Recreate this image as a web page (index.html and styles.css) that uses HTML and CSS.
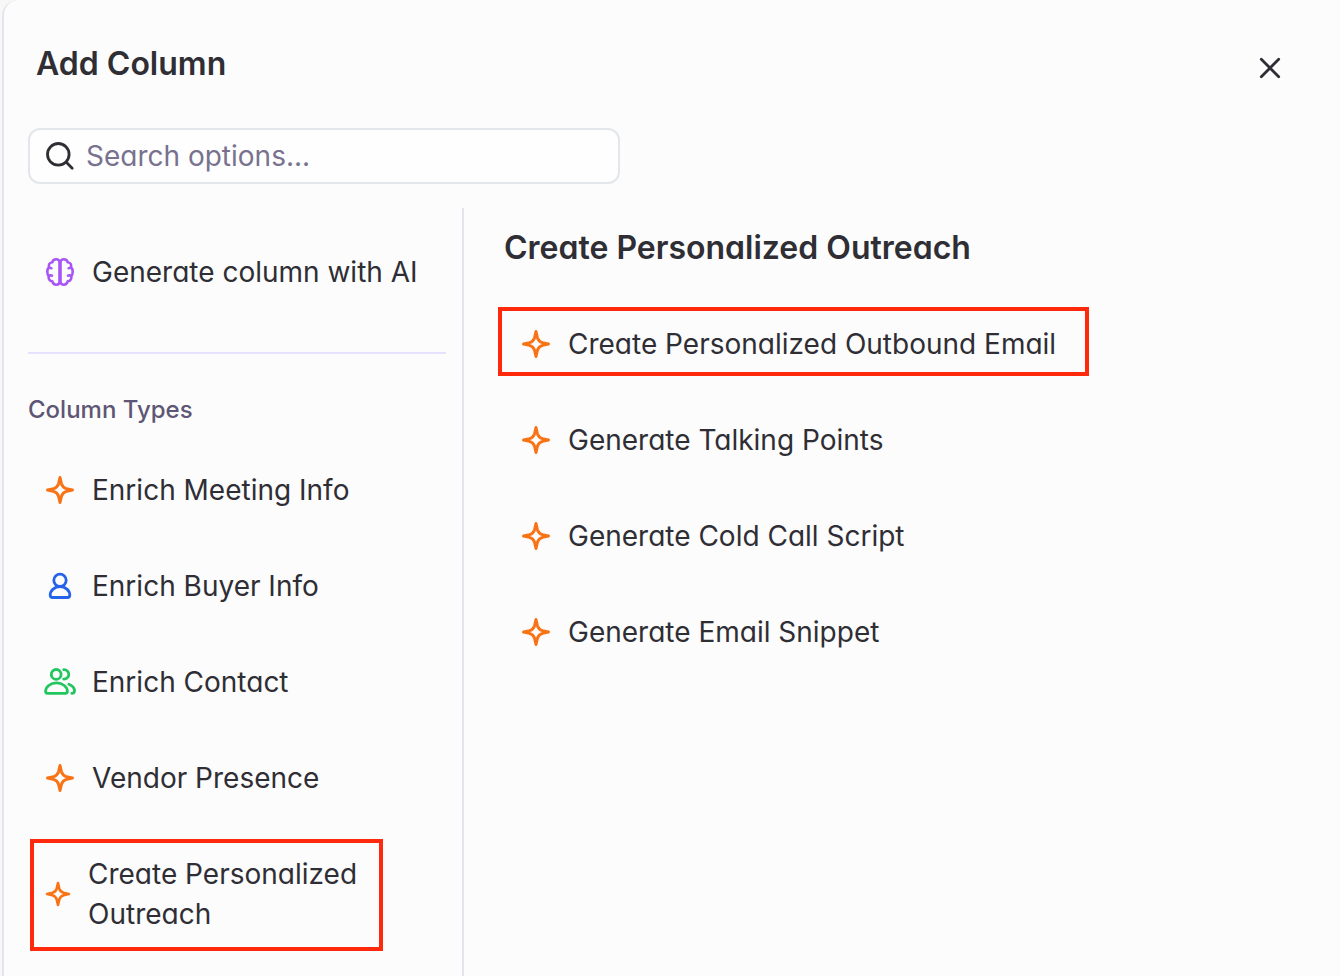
FILE: index.html
```html
<!DOCTYPE html>
<html lang="en">
<head>
<meta charset="utf-8">
<meta name="viewport" content="width=device-width, initial-scale=1">
<title>Add Column</title>
<link rel="stylesheet" href="styles.css">
</head>
<body>
<svg class="sprite" aria-hidden="true">
  <symbol id="spark" viewBox="0 0 32 32"><path d="M16 3.5L17.4 9.6Q18.5 13.5 22.4 14.6L28.5 16L22.4 17.4Q18.5 18.5 17.4 22.4L16 28.5L14.6 22.4Q13.5 18.5 9.6 17.4L3.5 16L9.6 14.6Q13.5 13.5 14.6 9.6Z"/></symbol>
  <symbol id="user" viewBox="0 0 32 32"><circle cx="16" cy="10.3" r="6.2"/><path d="M16 16.5C10.7 16.5 6.2 20.7 6.2 25C6.2 26.7 7.1 27.5 8.6 27.5H23.4C24.9 27.5 25.8 26.7 25.8 25C25.8 20.7 21.3 16.5 16 16.5Z"/></symbol>
  <symbol id="users" viewBox="0 0 32 32"><circle cx="12.2" cy="8.4" r="4.9"/><path d="M12.5 16.8C6.3 16.8 1.6 21.3 1.6 25.2C1.6 26.6 2.5 27.3 3.8 27.3H21.2C22.5 27.3 23.4 26.6 23.4 25.2C23.4 21.3 18.7 16.8 12.5 16.8Z"/><path d="M19.7 3.7C22.6 3.5 24.8 5.6 24.8 8.4C24.8 11.2 22.6 13.2 19.7 13.1"/><path d="M24.8 18.2C28.2 19.5 30.5 22.2 30.5 25C30.5 26.5 29.6 27.3 27.8 27.3"/></symbol>
  <symbol id="brain" viewBox="0 0 32 32"><path d="M15.5 6.2C15.5 4.3 14 3.3 12.2 3.3C10.2 3.3 8.7 4.5 8.4 6.2C5.6 6.4 4.2 8.8 5 11.2C3.8 12.3 3.3 13.8 3.3 15.7C3.3 17.6 3.8 19 4.8 20C4 22.6 5.6 25.2 8.3 25.4C8.9 27.5 10.3 28.7 12.2 28.7C14 28.7 15.5 27.6 15.5 25.7Z"/><path d="M5 11.2Q5.6 12.2 7.4 12.3M4.8 20Q6.4 18.9 8 19.7"/><path d="M16.5 6.2C16.5 4.3 18 3.3 19.8 3.3C21.8 3.3 23.3 4.5 23.6 6.2C26.4 6.4 27.8 8.8 27 11.2C28.2 12.3 28.7 13.8 28.7 15.7C28.7 17.6 28.2 19 27.2 20C28 22.6 26.4 25.2 23.7 25.4C23.1 27.5 21.7 28.7 19.8 28.7C18 28.7 16.5 27.6 16.5 25.7Z"/><path d="M27 11.2Q26.4 12.2 24.6 12.3M27.2 20Q25.6 18.9 24 19.7"/></symbol>
</svg>
<main class="panel">
  <header class="header">
    <h1 class="title">Add Column</h1>
    <button class="close" type="button" aria-label="Close"><svg class="icon" viewBox="0 0 32 32"><path d="M7.3 7.3L24.7 24.7M24.7 7.3L7.3 24.7"/></svg></button>
  </header>
  <label class="search">
    <svg class="icon" viewBox="0 0 32 32"><circle cx="14.3" cy="14.3" r="10.8"/><path d="M22.3 22.3L28.2 28.2"/></svg>
    <input class="search-input" type="text" placeholder="Search options..." aria-label="Search options">
  </label>
  <div class="columns">
    <nav class="sidebar">
      <button class="item" type="button"><svg class="icon purple"><use href="#brain"/></svg><span>Generate column with AI</span></button>
      <hr class="divider">
      <h2 class="group">Column Types</h2>
      <div class="list">
        <button class="item" type="button"><svg class="icon orange"><use href="#spark"/></svg><span>Enrich Meeting Info</span></button>
        <button class="item" type="button"><svg class="icon blue"><use href="#user"/></svg><span>Enrich Buyer Info</span></button>
        <button class="item" type="button"><svg class="icon green"><use href="#users"/></svg><span>Enrich Contact</span></button>
        <button class="item" type="button"><svg class="icon orange"><use href="#spark"/></svg><span>Vendor Presence</span></button>
        <button class="item marked marked-side" type="button"><svg class="icon small orange"><use href="#spark"/></svg><span>Create Personalized<br>Outreach</span></button>
      </div>
    </nav>
    <section class="content">
      <h2 class="title">Create Personalized Outreach</h2>
      <div class="list">
        <button class="item marked marked-main" type="button"><svg class="icon orange"><use href="#spark"/></svg><span>Create Personalized Outbound Email</span></button>
        <button class="item" type="button"><svg class="icon orange"><use href="#spark"/></svg><span>Generate Talking Points</span></button>
        <button class="item" type="button"><svg class="icon orange"><use href="#spark"/></svg><span>Generate Cold Call Script</span></button>
        <button class="item" type="button"><svg class="icon orange"><use href="#spark"/></svg><span>Generate Email Snippet</span></button>
      </div>
    </section>
  </div>
</main>
</body>
</html>
```
FILE: styles.css
```css
* { box-sizing: border-box; }
body {
  margin: 0;
  padding-left: 2px;
  background: #f7f7f8;
  color: #2f2e35;
  font-family: Inter, "Liberation Sans", sans-serif;
  font-size: 28px;
  line-height: 40px;
  font-optical-sizing: none;
  font-feature-settings: "cv11";
}
h1, h2 { margin: 0; }
button, input { font: inherit; color: inherit; font-optical-sizing: none; }
button {
  border: 0;
  background: none;
  text-align: left;
  font-feature-settings: inherit;
  cursor: pointer;
}
.sprite { display: none; }
.panel {
  display: flex;
  flex-direction: column;
  min-height: 100vh;
  padding: 44px 0 0 24px;
  border-left: 2px solid #e3e5ea;
  border-top-left-radius: 16px;
  background: #fcfcfc;
}
.icon {
  flex: none;
  width: 32px;
  height: 32px;
  fill: none;
  stroke: currentColor;
  stroke-width: 2.8;
  stroke-linecap: round;
  stroke-linejoin: round;
}
.small { width: 28px; height: 28px; }
.orange { color: #f97316; stroke-width: 3; }
.blue { color: #2563eb; }
.green { color: #22c55e; }
.purple { color: #a855f7; stroke-width: 2.6; }
.header {
  display: flex;
  justify-content: space-between;
  padding: 0 54px 0 8px;
}
.title { font-size: 32px; font-weight: 600; line-height: 40px; }
.close { display: flex; align-self: center; padding: 8px 0 0; }
.search {
  display: flex;
  align-items: center;
  gap: 10px;
  width: 592px;
  max-width: 100%;
  height: 56px;
  margin: 44px 0 24px;
  padding: 0 14px;
  border: 2px solid #e3e6ea;
  border-radius: 12px;
  background: #fefefe;
}
.search-input {
  flex: 1;
  min-width: 0;
  padding: 0;
  border: 0;
  outline: 0;
  background: none;
}
.search-input::placeholder { color: #78728f; opacity: 1; }
.columns { display: flex; flex: 1; }
.sidebar {
  flex: none;
  width: 436px;
  padding: 36px 16px 0 0;
  border-right: 2px solid #e3e5ea;
}
.item {
  position: relative;
  display: flex;
  align-items: center;
  gap: 16px;
  padding: 8px 16px;
}
.divider { margin: 52px 0 36px; border: 0; border-top: 2px solid #e6e1ff; }
.group {
  margin-bottom: 32px;
  color: #5d5674;
  font-size: 24px;
  font-weight: 500;
}
.list { display: flex; flex-direction: column; align-items: flex-start; gap: 40px; }
.content { flex: 1; padding: 20px 24px 0 40px; }
.content .title { margin-bottom: 48px; }
.marked::after {
  content: "";
  position: absolute;
  border: 4px solid #ff2a0c;
}
.marked-side::after { inset: -7px -10px -9px 2px; }
.marked-main::after { inset: -9px -17px -4px -6px; }
```
